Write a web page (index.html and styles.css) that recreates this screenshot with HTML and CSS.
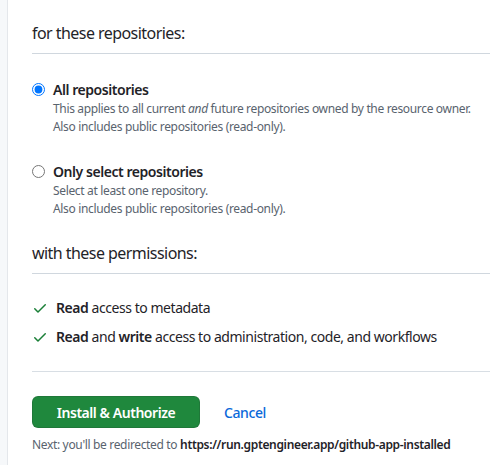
FILE: index.html
```html
<!DOCTYPE html>
<html lang="en">
<head>
  <meta charset="UTF-8">
  <meta name="viewport" content="width=device-width, initial-scale=1.0">
  <title>Install GitHub App</title>
  <link rel="stylesheet" href="styles.css">
</head>
<body>
  <div class="gutter"></div>

  <div class="content">
    <!-- Repository access -->
    <h2 class="section-title">for these repositories:</h2>

    <div class="options">
      <label class="option">
        <input type="radio" name="repos" value="all" checked>
        <span class="option-body">
          <span class="option-label">All repositories</span>
          <span class="option-note">This applies to all current <em>and</em> future repositories owned by the resource owner.</span>
          <span class="option-note">Also includes public repositories (read-only).</span>
        </span>
      </label>

      <label class="option">
        <input type="radio" name="repos" value="selected">
        <span class="option-body">
          <span class="option-label">Only select repositories</span>
          <span class="option-note">Select at least one repository.</span>
          <span class="option-note">Also includes public repositories (read-only).</span>
        </span>
      </label>
    </div>

    <!-- Permissions -->
    <h2 class="section-title">with these permissions:</h2>

    <ul class="permissions">
      <li>
        <svg class="check" width="16" height="16" viewBox="0 0 16 16"><path d="M13.78 4.22a.75.75 0 0 1 0 1.06l-7.25 7.25a.75.75 0 0 1-1.060 0L2.22 9.28a.751.751 0 0 1 .018-1.042.751.751 0 0 1 1.042-.018L6 10.94l6.72-6.72a.75.75 0 0 1 1.06 0Z"></path></svg>
        <span><strong>Read</strong> access to metadata</span>
      </li>
      <li>
        <svg class="check" width="16" height="16" viewBox="0 0 16 16"><path d="M13.78 4.22a.75.75 0 0 1 0 1.06l-7.25 7.25a.75.75 0 0 1-1.06 0L2.22 9.28a.751.751 0 0 1 .018-1.042.751.751 0 0 1 1.042-.018L6 10.94l6.72-6.72a.75.75 0 0 1 1.06 0Z"></path></svg>
        <span><strong>Read</strong> and <strong>write</strong> access to administration, code, and workflows</span>
      </li>
    </ul>

    <!-- Actions -->
    <div class="actions">
      <div class="buttons">
        <button class="btn-primary" type="button">Install &amp; Authorize</button>
        <a class="cancel" href="#">Cancel</a>
      </div>
      <p class="redirect">Next: you'll be redirected to <strong>https://run.gptengineer.app/github-app-installed</strong></p>
    </div>
  </div>
</body>
</html>
```

FILE: styles.css
```css
* {
  box-sizing: border-box;
  margin: 0;
  padding: 0;
}

body {
  font-family: "Noto Sans", "Liberation Sans", sans-serif;
  color: #1f2328;
  background: #fff;
  display: flex;
  min-height: 100vh;
}

.gutter {
  flex: 0 0 8px;
  background: #f6f8fa;
  border-right: 1px solid #e4e7eb;
}

.content {
  flex: 1;
  padding: 21px 9px 0 24px;
}

.section-title {
  font-size: 16px;
  font-weight: 400;
  line-height: 24px;
  letter-spacing: -0.55px;
  padding-bottom: 8px;
  border-bottom: 1px solid #d0d7de;
}

.options {
  padding: 26px 0 23px;
}

.option {
  display: flex;
  align-items: flex-start;
  margin-bottom: 26px;
}

.option:last-child {
  margin-bottom: 0;
}

.option input {
  width: 13px;
  height: 13px;
  margin: 3px 8px 0 0;
  flex: 0 0 13px;
}

.option-body {
  display: flex;
  flex-direction: column;
}

.option-label {
  font-size: 14px;
  font-weight: 600;
  line-height: 20px;
  letter-spacing: -0.45px;
}

.option-note {
  font-size: 12px;
  line-height: 18px;
  color: #59636e;
  letter-spacing: -0.34px;
}

.permissions {
  list-style: none;
  padding: 24px 0 24px;
  border-bottom: 1px solid #d8dee4;
}

.permissions li {
  display: flex;
  align-items: center;
  font-size: 14px;
  line-height: 20px;
  letter-spacing: -0.45px;
  margin-bottom: 9px;
}

.permissions li:last-child {
  margin-bottom: 0;
}

.permissions strong {
  font-weight: 600;
}

.check {
  fill: #1a7f37;
  margin: 0 8px 0 0;
  flex: 0 0 16px;
}

.actions {
  padding-top: 24px;
}

.buttons {
  display: flex;
  align-items: center;
  gap: 24px;
}

.btn-primary {
  width: 168px;
  height: 32px;
  background: #1f883d;
  color: #fff;
  border: 1px solid rgba(31, 35, 40, 0.15);
  border-radius: 6px;
  font-family: inherit;
  font-size: 14px;
  font-weight: 600;
  letter-spacing: -0.45px;
  cursor: pointer;
}

.cancel {
  color: #0969da;
  font-size: 14px;
  font-weight: 500;
  letter-spacing: -0.4px;
  text-decoration: none;
}

.redirect {
  margin-top: 8px;
  font-size: 12px;
  line-height: 18px;
  color: #59636e;
  letter-spacing: -0.34px;
}

.redirect strong {
  color: #1f2328;
  font-weight: 600;
}
```
